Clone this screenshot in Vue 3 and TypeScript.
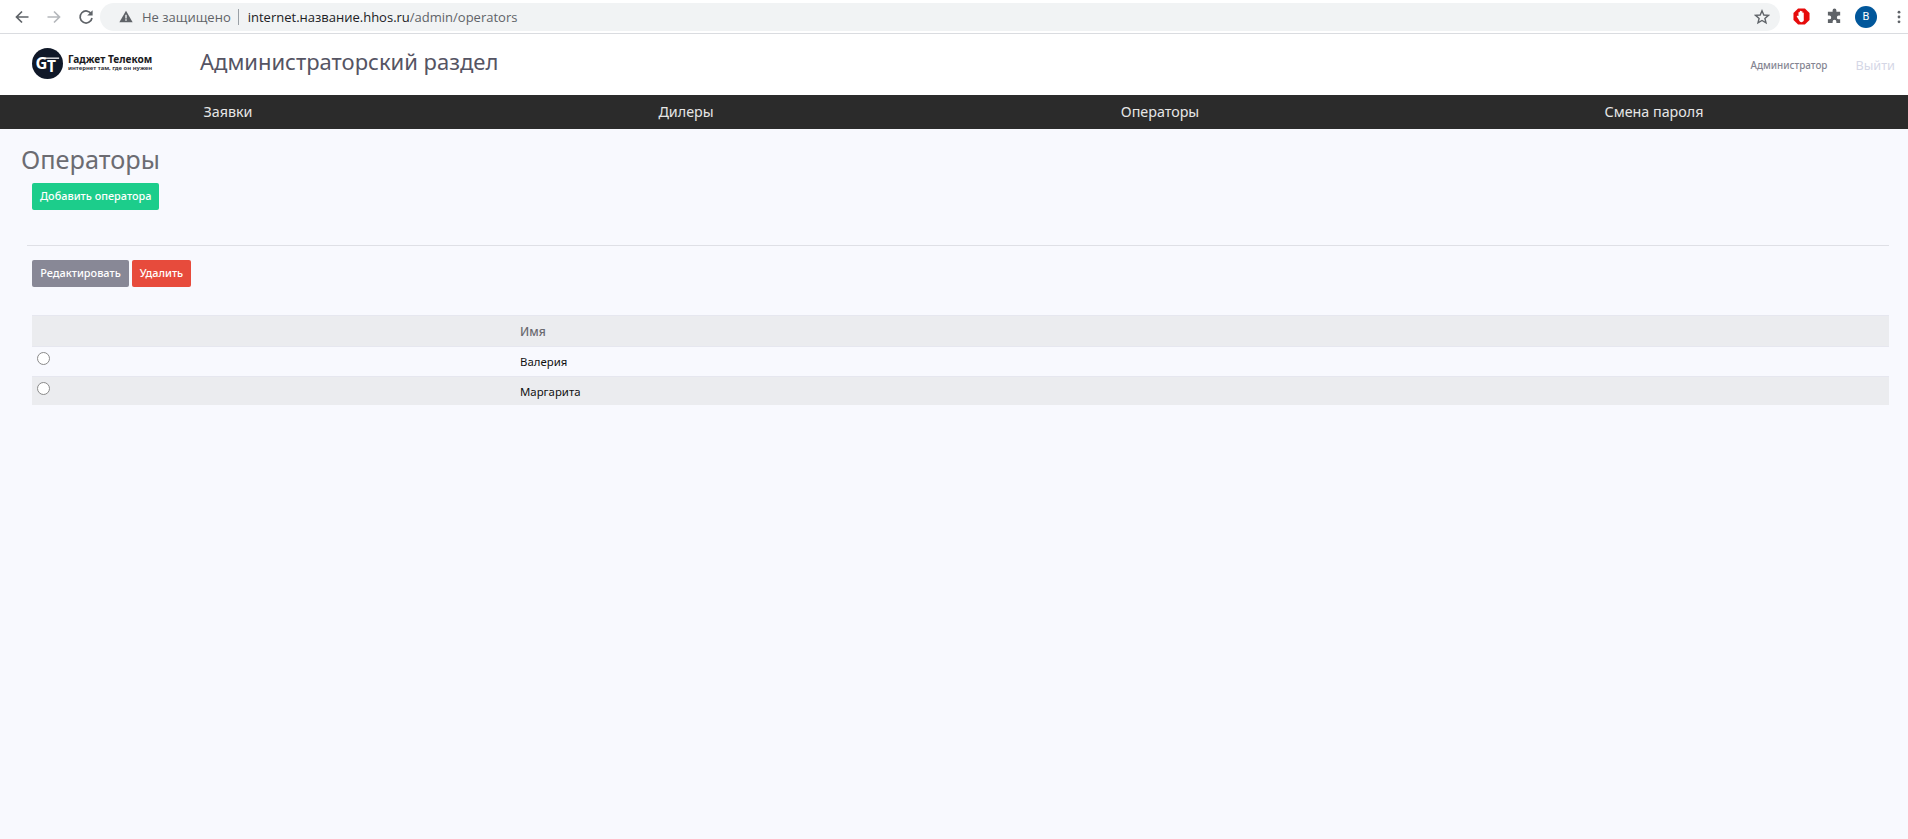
<script setup lang="ts">
const navItems: string[] = ['Заявки', 'Дилеры', 'Операторы', 'Смена пароля']
const operators: string[] = ['Валерия', 'Маргарита']
</script>

<template>
  <div class="page">
    <div class="browser">
      <div class="nav-btns">
        <svg class="ico" viewBox="0 0 16 16"><path d="M14.5 8H2.500M8 2.500 2.500 8 8 13.500" fill="none" stroke="#5f6368" stroke-width="1.700"/></svg>
        <svg class="ico" viewBox="0 0 16 16"><path d="M1.500 8h12M8 2.500 13.500 8 8 13.500" fill="none" stroke="#b5b8bc" stroke-width="1.700"/></svg>
        <svg class="ico" viewBox="0 0 16 16"><path d="M13.400 5.200A6 6 0 1 0 14 9" fill="none" stroke="#5f6368" stroke-width="1.700"/><path d="M14.600 1.200v5.400H9.200z" fill="#5f6368"/></svg>
      </div>
      <div class="omnibox">
        <svg class="warn" viewBox="0 0 16 14"><path d="M8 .5 15.600 13.500H.4z" fill="#5f6368"/><path d="M7.200 5h1.600v4.400H7.200zM7.200 10.200h1.600v1.600H7.200z" fill="#f1f3f4"/></svg>
        <span class="insecure">Не защищено</span>
        <span class="sep"></span>
        <span class="url"><span class="host">internet.название.hhos.ru</span>/admin/operators</span>
        <svg class="star" viewBox="0 0 16 16"><path d="M8 1.800 9.800 6l4.600.4-3.500 3 1.100 4.500L8 11.500l-4 2.400 1.100-4.500-3.500-3L6.200 6z" fill="none" stroke="#5f6368" stroke-width="1.400"/></svg>
      </div>
      <div class="exts">
        <svg class="ext" viewBox="0 0 18 18"><path d="M5.400 .5h7.200L17.500 5.400v7.200L12.600 17.500H5.400L.5 12.600V5.400z" fill="#e60c0c"/><path d="M5.800 8.500V5a.7.700 0 0 1 1.400 0V8.200V3.700a.7.700 0 0 1 1.400 0V8.200V4a.7.700 0 0 1 1.400 0V8.500V5.500a.7.700 0 0 1 1.400 0v6C12 14 10.500 15 9.200 15c-1.700 0-2.500-1-3.200-2.700L4.100 9.300c-.4-.8.600-1.500 1.200-.8z" fill="#fff"/></svg>
        <svg class="ext" viewBox="0 0 18 18"><path d="M7 2.500a2 2 0 0 1 4 0V4h4v4h-1.500a2 2 0 0 0 0 4H15v4h-4v-1.500a2 2 0 0 0-4 0V16H2v-4h1.500a2 2 0 0 0 0-4H2V4h5z" fill="#5f6368"/></svg>
        <span class="avatar">B</span>
        <svg class="dots" viewBox="0 0 4 16"><circle cx="2" cy="2.500" r="1.600" fill="#5f6368"/><circle cx="2" cy="8" r="1.600" fill="#5f6368"/><circle cx="2" cy="13.500" r="1.600" fill="#5f6368"/></svg>
      </div>
    </div>

    <header class="site-head">
      <div class="logo">
        <svg class="logo-mark" viewBox="0 0 32 32">
          <circle cx="16" cy="16" r="16" fill="#101828"/>
          <text x="3.500" y="22" class="logo-g">G</text>
          <text x="15.500" y="25" class="logo-t">T</text>
          <path d="M13 10.500h15" stroke="#fff" stroke-width="1.300"/>
        </svg>
        <div class="logo-text">
          <span class="logo-name">Гаджет Телеком</span>
          <span class="logo-sub">интернет там, где он нужен</span>
        </div>
      </div>
      <div class="section-title">Администраторский раздел</div>
      <div class="user">
        <span class="user-name">Администратор</span>
        <span class="logout">Выйти</span>
      </div>
    </header>

    <nav class="menu">
      <span v-for="item in navItems" :key="item">{{ item }}</span>
    </nav>

    <main class="content">
      <h1 class="heading">Операторы</h1>
      <div class="add-row">
        <button class="btn green">Добавить оператора</button>
      </div>
      <hr class="rule" />
      <div class="actions">
        <button class="btn gray">Редактировать</button>
        <button class="btn red">Удалить</button>
      </div>
      <table class="grid">
        <thead>
          <tr><th class="c1"></th><th>Имя</th></tr>
        </thead>
        <tbody>
          <tr v-for="op in operators" :key="op">
            <td class="c1"><span class="radio"></span></td>
            <td>{{ op }}</td>
          </tr>
        </tbody>
      </table>
    </main>
  </div>
</template>

<style>
html, body { margin: 0; background: #f8f9fe; }
</style>

<style scoped>
.page {
  width: 1908px;
  height: 839px;
  overflow: hidden;
  background: #f8f9fe;
  font-family: "Noto Sans", sans-serif;
}
.browser {
  height: 33px;
  background: #fff;
  border-bottom: 1px solid #dadce0;
  display: flex;
  align-items: center;
}
.nav-btns {
  width: 100px;
  padding: 0 5px 0 14px;
  box-sizing: border-box;
  display: flex;
  gap: 16px;
  flex: none;
}
.ico { width: 16px; height: 16px; }
.omnibox {
  width: 1680px;
  height: 28px;
  flex: none;
  background: #f1f3f4;
  border-radius: 14px;
  display: flex;
  align-items: center;
  padding: 0 9px 0 19px;
  box-sizing: border-box;
  font-family: "Open Sans", sans-serif;
  font-size: 13px;
}
.warn { width: 14px; height: 13px; margin-right: 9px; }
.insecure { color: #5f6368; }
.sep { width: 1px; height: 16px; background: #9aa0a6; margin: 0 9px 0 7px; }
.url { color: #5f6368; flex: 1; }
.host { color: #202124; }
.star { width: 16px; height: 16px; margin-right: 1px; }
.exts { flex: 1; display: flex; align-items: center; padding-left: 13px; }
.ext { width: 17px; height: 17px; margin-right: 16px; }
.avatar {
  width: 22px;
  height: 22px;
  border-radius: 50%;
  background: #01579b;
  color: #fff;
  font: 11px "Roboto", sans-serif;
  display: flex;
  align-items: center;
  justify-content: center;
  margin-left: -4px;
}
.dots { width: 4px; height: 14px; margin-left: 20px; }

.site-head {
  height: 61px;
  background: #fff;
  display: flex;
  align-items: center;
}
.logo {
  display: flex;
  align-items: center;
  gap: 5px;
  margin-left: 32px;
  width: 168px;
  flex: none;
}
.logo-mark { width: 31px; height: 31px; flex: none; margin-top: -3px; }
.logo-g { font: 700 17px "Noto Sans", sans-serif; fill: #fff; }
.logo-t { font: 700 16px "Noto Sans", sans-serif; fill: #fff; }
.logo-text { display: flex; flex-direction: column; margin-top: -4px; }
.logo-name { font-size: 10.150px; font-weight: 700; line-height: 11px; color: #1a1a22; white-space: nowrap; }
.logo-sub { font-size: 5.900px; font-weight: 700; line-height: 7px; color: #33333b; white-space: nowrap; }
.section-title {
  flex: 1;
  font-size: 22px;
  line-height: 30px;
  margin-top: -7px;
  color: #555463;
}
.user { display: flex; align-items: center; padding-right: 13px; padding-top: 1px; }
.user-name { font-size: 9.900px; font-weight: 500; color: #858592; margin-right: 28px; }
.logout { font-size: 12.700px; color: #d5d7e6; }

.menu {
  height: 34px;
  background: #2b2b2b;
  display: grid;
  grid-template-columns: 456px 460px 488px 500px;
  align-items: center;
  justify-items: center;
  color: #e6e6e6;
  font-size: 14.300px;
  line-height: 32px;
  padding-bottom: 1px;
  box-sizing: border-box;
}

.heading {
  margin: 0;
  padding: 13px 0 0 21px;
  font-size: 25.300px;
  line-height: 34px;
  font-weight: 400;
  color: #6c6c72;
}
.add-row { padding: 7px 0 0 32px; height: 31px; }
.btn {
  height: 27px;
  border: none;
  border-radius: 2px;
  padding: 0 8px 2px;
  color: #fff;
  font-family: "Noto Sans", sans-serif;
  font-size: 10.900px;
  font-weight: 500;
  line-height: 25px;
}
.green { background: #1ccd8b; }
.gray { background: #888896; width: 97px; padding: 0 0 2px; }
.red { background: #e74b3c; margin-left: 3px; width: 59px; padding: 0 0 2px; }
.rule {
  margin: 31px 19px 0 27px;
  border: none;
  border-top: 1px solid #dfe0e6;
}
.actions { padding: 14px 0 0 32px; display: flex; }
.grid {
  margin: 28px 0 0 32px;
  width: 1857px;
  border-collapse: collapse;
  font-size: 11.400px;
  table-layout: fixed;
}
.c1 { width: 488px; padding-left: 5px !important; box-sizing: border-box; }
.grid th, .grid td { text-align: left; padding: 0; }
.grid th {
  height: 30px;
  background: #ebecef;
  font-weight: 500;
  font-size: 12px;
  color: #6a6a70;
  border-top: 1px solid #e6e7ef;
  border-bottom: 1px solid #e6e7ef;
}
.grid td {
  height: 29px;
  color: #111;
  border-bottom: 1px solid #e6e7ef;
}
.grid tbody tr:nth-child(2) td { background: #ebecef; border-bottom: none; height: 28px; }
.radio {
  display: block;
  width: 11px;
  height: 11px;
  border: 1px solid #8a8a8a;
  border-radius: 50%;
  background: #fff;
  margin: -6px 0 0 0;
}
</style>
